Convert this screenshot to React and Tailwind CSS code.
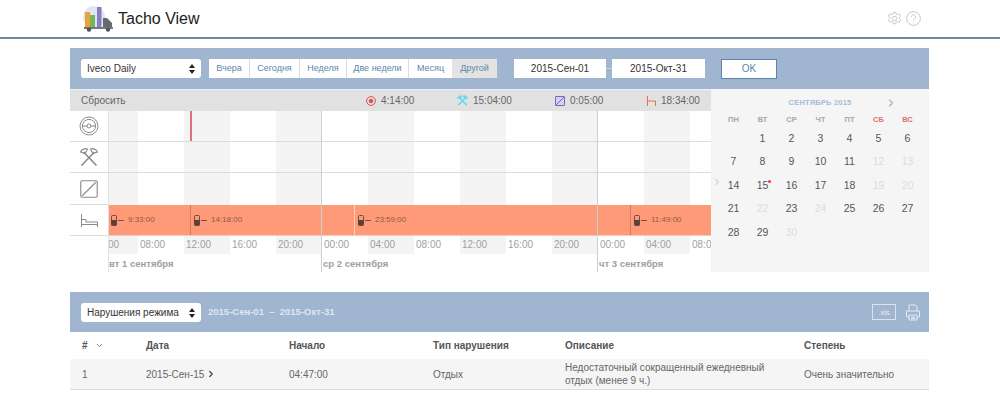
import { ChevronRight, ChevronDown } from 'lucide-react';

const ranges = ['Вчера', 'Сегодня', 'Неделя', 'Две недели', 'Месяц', 'Другой'];
const rangeWidths = ['w-[41px]', 'w-[50px]', 'w-[47px]', 'w-[62px]', 'w-[43px]', 'w-[45px]'];
const ticks = ['08:00', '12:00', '16:00', '20:00', '00:00', '04:00', '08:00', '12:00', '16:00', '20:00', '00:00', '04:00', '08:00'];

const weekDays = ['ПН', 'ВТ', 'СР', 'ЧТ', 'ПТ', 'СБ', 'ВС'];
const dimmed = [12, 13, 19, 20, 22, 24, 30];

const SelectIcon = () => (
    <svg width="6" height="10" viewBox="0 0 6 10" className="absolute right-[6px] top-[5px]">
        <path d="M3 0 L6 4 H0 Z M3 10 L0 6 H6 Z" fill="#222" />
    </svg>
);

const Select = ({ label }) => (
    <div className="relative w-[120px] h-[19px] rounded-[3px] bg-white pl-[6px] text-[10px] leading-[19px] text-[#333]">
        {label}
        <SelectIcon />
    </div>
);

const Logo = () => (
    <svg width="33" height="26" viewBox="0 0 33 26" className="shrink-0">
        <circle cx="13" cy="11" r="11" fill="#dfe6f2" />
        <rect x="4" y="6" width="5" height="15" fill="#e8a33d" />
        <rect x="9" y="9" width="5" height="12" fill="#7ab55c" />
        <rect x="16" y="1" width="4.500" height="20" fill="#8a7cc4" />
        <path d="M22 12 H26 L31 17 V22 H22 Z" fill="#666a6e" />
        <rect x="3" y="21" width="29" height="2" fill="#77797b" />
        <circle cx="8" cy="23.500" r="2.200" fill="#555" />
        <circle cx="27" cy="23.500" r="2.200" fill="#555" />
    </svg>
);

const TachoIcon = ({ size = 20, color = '#8a8a8a' }) => (
    <svg width={size} height={size} viewBox="0 0 20 20" fill="none" stroke={color} strokeWidth="1">
        <circle cx="10" cy="10" r="9" />
        <circle cx="10" cy="10" r="6.600" />
        <circle cx="10" cy="10" r="2" />
        <path d="M3.500 10 H8 M12 10 H16.500" />
    </svg>
);

const HammersIcon = ({ size = 20, color = '#8a8a8a', width = 1.6, headWidth = 1.1, fill = 'none' }) => (
    <svg width={size} height={size} viewBox="0 0 20 20" fill={fill} stroke={color} strokeWidth={width}>
        <path d="M4.500 5 L17.500 18.500 M15.500 5 L2.500 18.500" />
        <path d="M1.500 5 Q4 0.500 8.500 2 L6 6.500 Z M18.500 5 Q16 0.500 11.500 2 L14 6.500 Z" strokeWidth={headWidth} />
    </svg>
);

const SquareIcon = ({ size = 18, color = '#8a8a8a', fill = 'none', width = 1 }) => (
    <svg width={size} height={size} viewBox="0 0 16 16" fill={fill} stroke={color} strokeWidth={width}>
        <rect x="0.700" y="0.700" width="14.600" height="14.600" rx="1" />
        <path d="M2 14 L14 2" />
    </svg>
);

const BedIcon = () => (
    <svg width="17" height="13" viewBox="0 0 17 13" fill="none" stroke="#8a8a8a" strokeWidth="1">
        <path d="M0.500 0 V13 M0.500 5.500 H5 V8 H16.500 V13 M0.500 10.500 H16.500" />
    </svg>
);

const Lock = ({ time }) => (
    <div className="flex items-center text-[8px] text-[#8c5a46]">
        <svg width="6" height="11" viewBox="0 0 6 11">
            <rect x="0.500" y="0.500" width="5" height="10" rx="1" fill="none" stroke="#6e4a3c" />
            <rect x="0.500" y="5" width="5" height="5.500" fill="#5d4036" />
        </svg>
        <span className="w-[6px] ml-px border-t border-dashed border-[#7a5040]" />
        <span className="ml-[4px]">{time}</span>
    </div>
);

const Stat = ({ icon, value, className }) => (
    <div className={`flex items-center gap-[5px] ${className}`}>
        {icon}
        <span>{value}</span>
    </div>
);

const Stripes = () => (
    <div className="absolute inset-0 flex">
        <div className="w-[30px] shrink-0 bg-[#f4f4f4]" />
        {ticks.map((tick, i) => (
            <div key={i} className={`w-[46px] shrink-0 ${i % 2 === 1 ? 'bg-[#f4f4f4]' : ''}`} />
        ))}
    </div>
);

const Calendar = () => {
    const days = [null, ...Array.from({ length: 30 }, (_, i) => i + 1)];
    return (
        <div className="relative w-[218px] h-[183px] bg-[#f5f5f5] px-[8px]">
            <div className="relative h-[24px] pt-[8px] text-center text-[7.500px] leading-[12px] font-bold tracking-[0.2px] text-[#a3bcd8]">
                СЕНТЯБРЬ 2015
                <ChevronRight className="absolute left-[166px] top-[8px] w-[12px] h-[12px] text-[#a9b3bd]" strokeWidth={2.5} />
            </div>
            <div className="grid grid-cols-[repeat(7,29px)] h-[13px] text-center text-[7.500px] leading-[13px] font-bold">
                {weekDays.map((day, i) => (
                    <span key={day} className={i > 4 ? 'text-[#e0706f]' : 'text-[#a6a6a6]'}>{day}</span>
                ))}
            </div>
            <div className="grid grid-cols-[repeat(7,29px)] auto-rows-[23.4px] mt-[1px] text-center text-[10.500px] leading-[23.4px]">
                {days.map((day, i) => (
                    <span key={i} className={`relative ${dimmed.includes(day) ? 'text-[#dcdcdc]' : 'text-[#555]'}`}>
                        {day}
                        {day === 15 && <span className="absolute left-[20px] top-[6px] w-[3px] h-[3px] rounded-full bg-[#e0453f]" />}
                    </span>
                ))}
            </div>
            <ChevronRight className="absolute left-[1px] top-[88px] w-[10px] h-[10px] text-[#c8c8c8]" strokeWidth={2.5} />
        </div>
    );
};

const App = () => {
    return (
        <div className="h-[415px] w-[1000px] overflow-hidden bg-white font-['Liberation_Sans',Arial,sans-serif]">
            <header className="flex items-center h-[39px] border-b-2 border-[#6c8a9c] pl-[81px] pr-[79px]">
                <Logo />
                <span className="ml-[4px] text-[16px] text-[#222]">Tacho View</span>
                <div className="ml-auto flex items-center gap-[4px]">
                    <svg width="15" height="15" viewBox="0 0 24 24" fill="none" stroke="#b4c2cc" strokeWidth="1.400">
                        <path d="M10 2 h4 l.6 3 2.200 1 2.700-1.600 2.600 3.600-2.200 2 v2.400 l2.200 2-2.600 3.600-2.700-1.600-2.200 1-.6 3 h-4 l-.6-3-2.200-1-2.700 1.600-2.600-3.600 2.200-2 v-2.400 l-2.200-2 2.600-3.600 2.700 1.600 2.200-1 z" />
                        <circle cx="12" cy="12" r="3.500" />
                    </svg>
                    <svg width="15" height="15" viewBox="0 0 24 24" fill="none" stroke="#b4c2cc" strokeWidth="1.400">
                        <circle cx="12" cy="12" r="11" />
                        <path d="M8.500 9.500 a3.500 3.500 0 1 1 5.500 3 c-1.400 1-2 1.600-2 3" />
                        <path d="M12 17.500 v1.500" />
                    </svg>
                </div>
            </header>

            <main className="ml-[70px] mt-[9px] w-[859px]">
                <section className="flex items-center h-[41px] bg-[#a0b5cf] pl-[11px]">
                    <Select label="Iveco Daily" />
                    <div className="ml-[8px] flex h-[19px] text-[9px] leading-[19px] text-center text-[#5d85ab]">
                        {ranges.map((range, i) => (
                            <span key={range} className={`${rangeWidths[i]} ${i === 5 ? 'bg-[#e3e3e3]' : 'bg-white'} ${i < 4 ? 'border-r border-[#d5dde6]' : ''}`}>
                                {range}
                            </span>
                        ))}
                    </div>
                    <div className="ml-[17px] w-[92px] h-[19px] bg-white text-center text-[10px] leading-[19px] text-[#333]">2015-Сен-01</div>
                    <span className="w-[6px] h-px bg-[#c3d0e0]" />
                    <div className="w-[93px] h-[19px] bg-white text-center text-[10px] leading-[19px] text-[#333]">2015-Окт-31</div>
                    <button className="ml-[16px] w-[56px] h-[20px] border border-[#5d85ab] bg-white text-[10px] text-[#5d85ab]">OK</button>
                </section>

                <div className="flex items-start">
                    <div className="w-[641px] shrink-0">
                        <div className="flex items-center h-[22px] bg-[#e1e1e1] border-t border-[#eef1f5] pl-[11px] text-[10px] text-[#666]">
                            <span className="w-[285px]">Сбросить</span>
                            <Stat
                                className="w-[91px]"
                                value="4:14:00"
                                icon={
                                    <svg width="10" height="10" viewBox="0 0 10 10" fill="none" stroke="#d9534f">
                                        <circle cx="5" cy="5" r="4.400" />
                                        <circle cx="5" cy="5" r="1.800" fill="#d9534f" />
                                    </svg>
                                }
                            />
                            <Stat className="w-[98px]" value="15:04:00" icon={<HammersIcon size={11} color="#6fd9ea" width={3} headWidth={2.5} fill="#6fd9ea" />} />
                            <Stat className="w-[92px]" value="0:05:00" icon={<SquareIcon size={10} color="#6f55b8" fill="#d9d2ee" width={1.5} />} />
                            <Stat
                                value="18:34:00"
                                icon={
                                    <svg width="9" height="10" viewBox="0 0 9 10" fill="none" stroke="#e0734f" strokeWidth="1">
                                        <path d="M.5 0 V10 M.5 5 H8.500 V10" />
                                    </svg>
                                }
                            />
                        </div>

                        <div className="flex">
                            <div className="w-[38px] shrink-0">
                                <div className="flex items-center justify-center h-[31px] border-b border-[#dcdcdc]"><TachoIcon /></div>
                                <div className="flex items-center justify-center h-[31px] border-b border-[#dcdcdc]"><HammersIcon /></div>
                                <div className="flex items-center justify-center h-[32px] border-b border-[#dcdcdc]"><SquareIcon /></div>
                                <div className="flex items-center justify-center h-[31px] border-b border-[#dcdcdc]"><BedIcon /></div>
                            </div>

                            <div className="w-[603px] overflow-hidden">
                                <div className="relative h-[161px]">
                                    <div className="absolute left-0 top-0 h-[143px] w-full"><Stripes /></div>
                                    <div className="relative">
                                        <div className="h-[31px] border-b border-[#dcdcdc]">
                                            <div className="ml-[82px] w-[2px] h-full bg-[#e0707a]" />
                                        </div>
                                        <div className="h-[31px] border-b border-[#dcdcdc]" />
                                        <div className="h-[32px]" />
                                        <div className="flex h-[31px] bg-[#ff9a78] border-b border-[#f0ccc0]">
                                            <div className="flex items-center w-[83px] shrink-0 pl-[3px] border-r border-[#d9785a]"><Lock time="9:33:00" /></div>
                                            <div className="flex items-center w-[164px] shrink-0 pl-[3px] border-r border-[#ffd0c0]"><Lock time="14:18:00" /></div>
                                            <div className="flex items-center w-[276px] shrink-0 pl-[3px] border-r border-[#d9785a]"><Lock time="23:59:00" /></div>
                                            <div className="flex items-center flex-1 pl-[3px]"><Lock time="11:49:00" /></div>
                                        </div>
                                        <div className="flex h-[18px] text-[10px] leading-[18px] text-[#a0a0a0]">
                                            <span className="w-[30px] shrink-0 text-left">00</span>
                                            {ticks.map((tick, i) => (
                                                <span key={i} className="w-[46px] shrink-0 whitespace-nowrap pl-[2px]">{tick}</span>
                                            ))}
                                        </div>
                                        <div className="flex h-[18px] text-[9.500px] leading-[20px] font-bold text-[#a0a0a0] whitespace-nowrap">
                                            <span className="w-[213px] shrink-0 pl-[1px]">вт 1 сентября</span>
                                            <span className="w-[276px] shrink-0 pl-[2px]">ср 2 сентября</span>
                                            <span className="pl-[2px]">чт 3 сентября</span>
                                        </div>
                                    </div>
                                    <div className="absolute left-0 top-0 h-full w-px bg-[#e2e2e2]" />
                                    <div className="absolute left-[213px] top-0 h-full w-px bg-[#cfcfcf]" />
                                    <div className="absolute left-[489px] top-0 h-full w-px bg-[#cfcfcf]" />
                                </div>
                            </div>
                        </div>
                    </div>
                    <Calendar />
                </div>

                <section className="flex items-center h-[40px] mt-[20px] bg-[#a0b5cf] pl-[11px] pr-[9px]">
                    <Select label="Нарушения режима" />
                    <span className="ml-[7px] text-[9.500px] font-bold text-[#dfe7f1]">2015-Сен-01 &nbsp;–&nbsp; 2015-Окт-31</span>
                    <div className="ml-auto flex items-center gap-[10px]">
                        <span className="flex items-end justify-center w-[24px] h-[16px] border border-[#dbe4ee] text-[7.500px] leading-[12px] text-[#e6edf4]">.xls</span>
                        <svg width="14" height="17" viewBox="0 0 14 17" fill="none" stroke="#e3eaf2" strokeWidth="1">
                            <path d="M3 7 V1 H9.500 L11 2.500 V7" />
                            <path d="M3 13 H.5 V7 H13.500 V13 H11" />
                            <path d="M3 11 H11 V16 H3 Z M5 13 H9 M5 14.500 H9" />
                        </svg>
                    </div>
                </section>

                <div className="grid grid-cols-[64px_143px_144px_132px_239px_55px] h-[27px] items-center pl-[12px] text-[10px] font-bold text-[#555] whitespace-nowrap">
                    <span className="flex items-center gap-[7px]">#<ChevronDown className="w-[9px] h-[9px] text-[#777]" strokeWidth={2.5} /></span>
                    <span>Дата</span>
                    <span>Начало</span>
                    <span>Тип нарушения</span>
                    <span>Описание</span>
                    <span>Степень</span>
                </div>
                <div className="grid grid-cols-[64px_143px_144px_132px_239px_100px] h-[31px] items-center pl-[12px] bg-[#f5f5f5] border-b border-[#dedede] text-[10px] leading-[13px] text-[#666]">
                    <span>1</span>
                    <span className="flex items-center gap-[2px]">2015-Сен-15<ChevronRight className="w-[10px] h-[10px] text-[#444]" strokeWidth={3} /></span>
                    <span>04:47:00</span>
                    <span>Отдых</span>
                    <span className="w-[200px]">Недостаточный сокращенный ежедневный отдых (менее 9 ч.)</span>
                    <span className="whitespace-nowrap">Очень значительно</span>
                </div>
            </main>
        </div>
    );
};

export default App;
